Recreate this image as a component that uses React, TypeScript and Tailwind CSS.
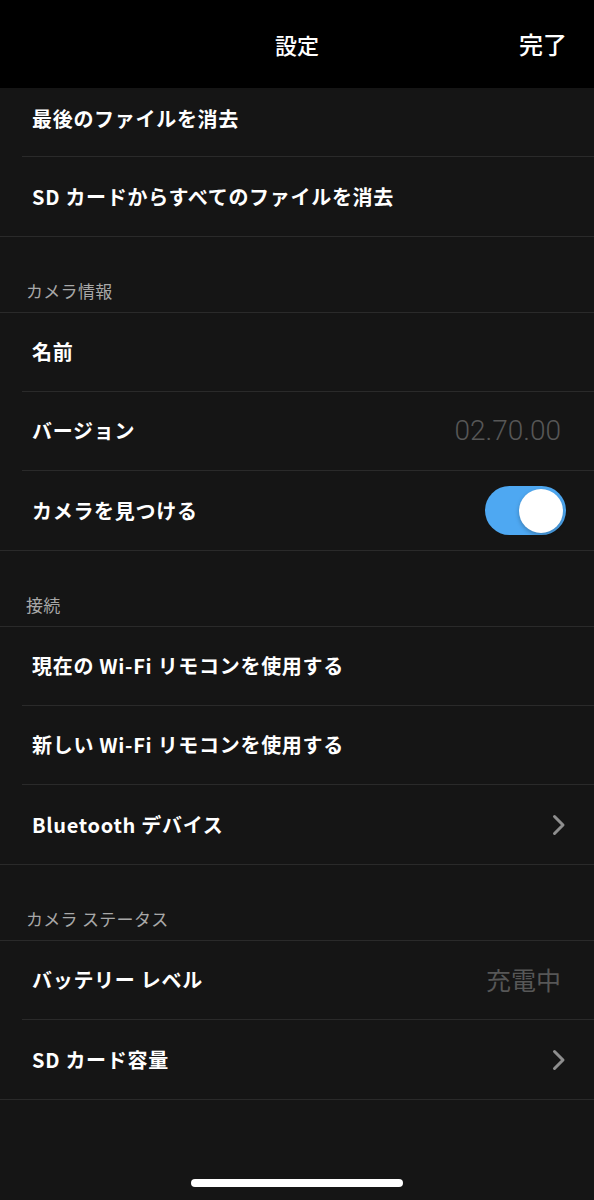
import React from 'react';

const font = { fontFamily: '"Noto Sans CJK JP", "Noto Sans", sans-serif' };

function Chevron() {
  return (
    <svg width="14" height="22" viewBox="0 0 14 22" fill="none">
      <path d="M2.5 2.5 L11 11 L2.5 19.5" stroke="#8e8e8e" strokeWidth="3" strokeLinecap="round" strokeLinejoin="round" />
    </svg>
  );
}

function Toggle() {
  return (
    <div className="w-[81px] h-[49px] rounded-full bg-[#4ea8f2] flex items-center justify-end pr-[3px]">
      <div className="w-[44px] h-[44px] rounded-full bg-white shadow-[0_2px_4px_rgba(0,0,0,0.25)]" />
    </div>
  );
}

type Row = {
  label: string;
  value?: string;
  digits?: boolean;
  chevron?: boolean;
  toggle?: boolean;
};

function SettingRow({ row, last, first }: { row: Row; last: boolean; first?: boolean }) {
  return (
    <div className={last ? 'border-b border-[#2a2a2a]' : 'pl-[22px]'}>
      <div
        className={`${first ? 'h-[69px] pb-[6px]' : 'h-[79px]'} flex items-center justify-between ${
          last ? 'pl-[32px]' : 'pl-[10px] border-b border-[#2a2a2a]'
        } pr-[28px]`}
      >
        <span className="text-[20px] font-bold text-white tracking-[0.7px]">{row.label}</span>
        {row.value &&
          (row.digits ? (
            <span className="text-[28px] text-[#575757] mr-[5px]" style={{ fontFamily: 'Roboto, sans-serif', fontWeight: 300 }}>
              {row.value}
            </span>
          ) : (
            <span className="text-[25px] text-[#575757] mr-[5px]">{row.value}</span>
          ))}
        {row.chevron && <Chevron />}
        {row.toggle && <Toggle />}
      </div>
    </div>
  );
}

function SectionHeader({ title }: { title: string }) {
  return (
    <div className="h-[76px] flex items-end pl-[26px] pb-[9px] border-b border-[#2a2a2a]">
      <span className="text-[17px] text-[#a8a8a8] tracking-[0.3px]">{title}</span>
    </div>
  );
}

const sections: { title?: string; rows: Row[] }[] = [
  {
    rows: [{ label: '最後のファイルを消去' }, { label: 'SD カードからすべてのファイルを消去' }],
  },
  {
    title: 'カメラ情報',
    rows: [{ label: '名前' }, { label: 'バージョン', value: '02.70.00', digits: true }, { label: 'カメラを見つける', toggle: true }],
  },
  {
    title: '接続',
    rows: [
      { label: '現在の Wi-Fi リモコンを使用する' },
      { label: '新しい Wi-Fi リモコンを使用する' },
      { label: 'Bluetooth デバイス', chevron: true },
    ],
  },
  {
    title: 'カメラ ステータス',
    rows: [{ label: 'バッテリー レベル', value: '充電中' }, { label: 'SD カード容量', chevron: true }],
  },
];

export default function App() {
  return (
    <div className="w-[594px] h-[1200px] bg-[#151515] flex flex-col overflow-hidden" style={font}>
      <div className="h-[88px] bg-black relative flex items-center justify-center shrink-0">
        <span className="text-[22px] font-medium text-white">設定</span>
        <span className="absolute right-[27px] text-[24px] font-medium text-white">完了</span>
      </div>

      {sections.map((s, si) => (
        <div key={si}>
          {s.title && <SectionHeader title={s.title} />}
          {s.rows.map((r, ri) => (
            <SettingRow key={ri} row={r} first={si === 0 && ri === 0} last={ri === s.rows.length - 1} />
          ))}
        </div>
      ))}

      <div className="flex-1 flex items-end justify-center pb-[13px]">
        <div className="w-[212px] h-[8px] rounded-full bg-white" />
      </div>
    </div>
  );
}
